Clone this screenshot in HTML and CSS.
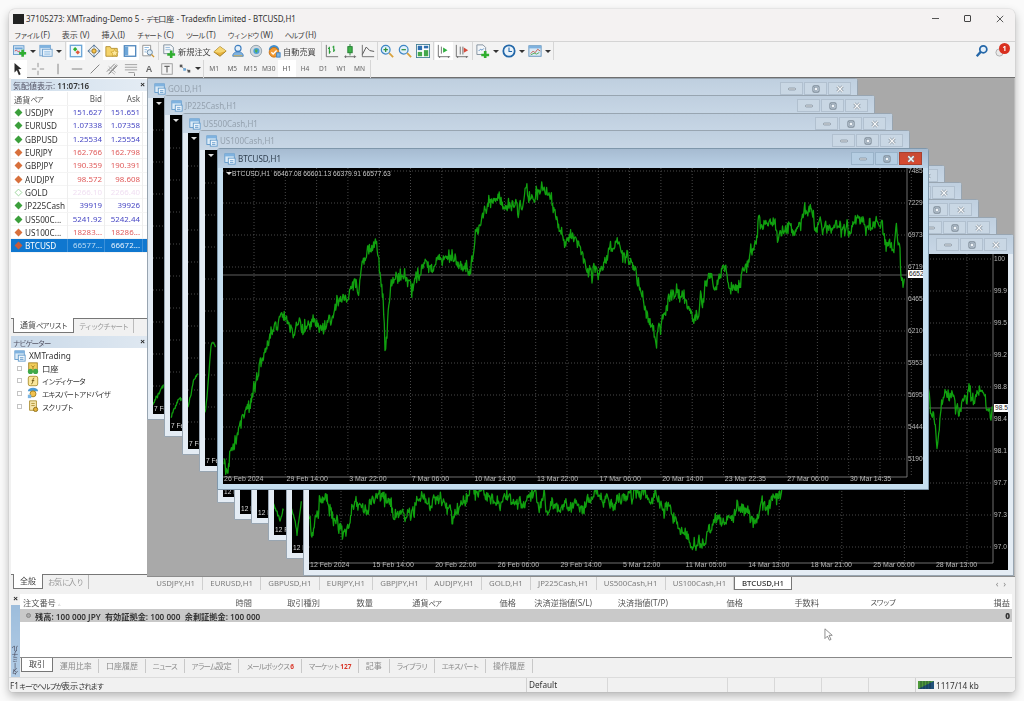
FILE: index.html
```html
<!DOCTYPE html>
<html lang="ja">
<head>
<meta charset="utf-8">
<title>XMTrading MT4</title>
<link rel="stylesheet" href="styles.css">
</head>
<body>
<svg class="defs" aria-hidden="true">
  <symbol id="i-new" viewBox="0 0 16 16"><rect x=".5" y="2" width="12" height="10" fill="#d4e6f6" stroke="#5f97c9"/><rect x="2" y="4" width="9" height="2" fill="#6ea6d8"/><path d="M2 8l2-1 2 2 2-1" stroke="#c44" fill="none"/><path d="M7 9h2.500V6.500h3V9H15v3h-2.500v2.500h-3V12H7z" fill="#2fae2f"/></symbol>
  <symbol id="i-prof" viewBox="0 0 16 16"><rect x="1" y="1.500" width="12" height="12" fill="#d4e6f6" stroke="#6f9fcb"/><rect x="1" y="1.500" width="12" height="3" fill="#7fb2df"/><rect x="4" y="6" width="11" height="8" fill="#e8f2fb" stroke="#6f9fcb"/><path d="M6 9h7M6 11.500h7" stroke="#7fb2df"/></symbol>
  <symbol id="i-mw" viewBox="0 0 16 16"><rect x="1.500" y="1.500" width="13" height="13" fill="#eef6fb" stroke="#6aa5d6" stroke-width="1.500"/><path d="M5 4l2.500 2.500L5 9 2.500 6.500z" fill="#2fae2f" transform="translate(2 -.5)"/><path d="M10 7l2.500 2.500L10 12 7.500 9.500z" fill="#e0583c"/></symbol>
  <symbol id="i-nav" viewBox="0 0 16 16"><path d="M8 1l7 7-7 7-7-7z" fill="#e9eef3" stroke="#5c6f80"/><circle cx="8" cy="8" r="2.500" fill="#f6c24a" stroke="#8a6a1a"/><path d="M8 1v3M8 12v3M1 8h3M12 8h3" stroke="#3b6fa5"/></symbol>
  <symbol id="i-fav" viewBox="0 0 16 16"><path d="M1 3h5l1 2h7v9H1z" fill="#f5d46b" stroke="#b08c2a"/><path d="M11 6l1.300 2.700 3 .4-2.200 2 .6 3-2.700-1.500-2.700 1.500.6-3-2.200-2 3-.4z" fill="#fde9a0" stroke="#c59a20" stroke-width=".7"/></symbol>
  <symbol id="i-panel" viewBox="0 0 16 16"><rect x="1.500" y="2" width="13" height="12" fill="#fff" stroke="#4f87bd" stroke-width="1.500"/><rect x="2" y="3" width="4" height="10" fill="#6ea6d8"/></symbol>
  <symbol id="i-tester" viewBox="0 0 16 16"><path d="M2 1.500h9v12H2z" fill="#fff" stroke="#8c8c8c"/><path d="M4 4h5M4 6.500h3M4 9h2" stroke="#7fb2df"/><circle cx="10" cy="9.500" r="3" fill="#dcecf8" stroke="#5f7f9d"/><path d="M12 12l3 3" stroke="#c9932d" stroke-width="1.500"/></symbol>
  <symbol id="i-order" viewBox="0 0 16 16"><path d="M2 1h8l3 3v7H2z" fill="#f3f6f9" stroke="#7c8a97"/><path d="M4 4h5M4 6.500h6" stroke="#8fb6d9"/><path d="M6 10.500h3v-3h3v3h3v3h-3v2.500H9v-2.500H6z" fill="#2fae2f"/></symbol>
  <symbol id="i-gold" viewBox="0 0 16 16"><path d="M1 9l7-6 7 5-7 6z" fill="#e6b23c" stroke="#9a7417"/><path d="M8 3l7 5-7 2-7-1z" fill="#f6d673"/></symbol>
  <symbol id="i-users" viewBox="0 0 16 16"><circle cx="8" cy="5" r="3.500" fill="#e4f0fa" stroke="#3f7fc0" stroke-width="1.300"/><path d="M2 14c0-4 3-5 6-5s6 1 6 5z" fill="#7fb2df" stroke="#3f7fc0"/><path d="M3 13.500h10" stroke="#e6b23c"/></symbol>
  <symbol id="i-globe" viewBox="0 0 16 16"><circle cx="8" cy="8" r="6.500" fill="#cfd8df" stroke="#8d9aa5"/><circle cx="8.500" cy="8" r="3.500" fill="#4a9fd8"/><path d="M7 6l3 .5L9 10 7 9z" fill="#4fae4f"/></symbol>
  <symbol id="i-auto" viewBox="0 0 16 16"><path d="M2 7a6 6 0 0 1 12 0z" fill="#3f8fd0"/><circle cx="8" cy="9.500" r="5.500" fill="#f29a33" stroke="#c46f14"/><path d="M5 9.500l2 2 4-4" stroke="#fff" stroke-width="1.500" fill="none"/><rect x="11" y="10" width="4" height="5" fill="#7cb5e2" stroke="#3f7fc0"/></symbol>
  <symbol id="i-bar" viewBox="0 0 16 16"><path d="M1.500 1v13.500H15" stroke="#666" fill="none"/><path d="M5 3v8M3.500 5H5M5 9h1.500M10 2v7M8.500 3.500H10M10 7h1.500" stroke="#1f9a2f" stroke-width="1.200"/></symbol>
  <symbol id="i-candle" viewBox="0 0 16 16"><path d="M1.500 14.500H15M3 16v-3M13 16v-3" stroke="#666"/><path d="M8 0v13" stroke="#1f7a2f"/><rect x="5.500" y="3" width="5" height="7" fill="#3fb34a" stroke="#1f7a2f"/></symbol>
  <symbol id="i-line" viewBox="0 0 16 16"><path d="M1.500 1v13.500H15" stroke="#666" fill="none"/><path d="M1.500 12L6 3.500l4 4 5 1" stroke="#555" stroke-width="1.100" fill="none"/></symbol>
  <symbol id="i-zin" viewBox="0 0 16 16"><circle cx="6.500" cy="6.500" r="5" fill="#dff0fb" stroke="#3f87c5" stroke-width="1.400"/><path d="M4 6.500h5M6.500 4v5" stroke="#2c8f3a" stroke-width="1.400"/><path d="M10.500 10.500l4.500 4.500" stroke="#d9a23b" stroke-width="2"/></symbol>
  <symbol id="i-zout" viewBox="0 0 16 16"><circle cx="6.500" cy="6.500" r="5" fill="#dff0fb" stroke="#3f87c5" stroke-width="1.400"/><path d="M4 6.500h5" stroke="#2c8f3a" stroke-width="1.400"/><path d="M10.500 10.500l4.500 4.500" stroke="#d9a23b" stroke-width="2"/></symbol>
  <symbol id="i-tile" viewBox="0 0 16 16"><rect x=".5" y=".5" width="15" height="15" fill="#fff" stroke="#3f7d92"/><rect x="2" y="2" width="5" height="5" fill="#2d6fb0"/><rect x="9" y="2" width="5" height="3" fill="#2d6fb0"/><rect x="2" y="9" width="5" height="5" fill="#43a84a"/><rect x="9" y="7" width="5" height="7" fill="#43a84a"/></symbol>
  <symbol id="i-scroll" viewBox="0 0 16 16"><path d="M1.500 1v13.500H15M3 16v-2M13 16v-2" stroke="#666" fill="none"/><path d="M5 3v8" stroke="#666"/><path d="M7 4l5 3-5 3z" fill="#2faf3f"/></symbol>
  <symbol id="i-shift" viewBox="0 0 16 16"><path d="M1.500 1v13.500H15M3 16v-2M13 16v-2" stroke="#666" fill="none"/><path d="M6 3v9M9 3v9" stroke="#666"/><path d="M10 4l5 3-5 3z" fill="#d64a3a"/></symbol>
  <symbol id="i-add" viewBox="0 0 16 16"><path d="M1 1h7l3 3v8H1z" fill="#f3f6f9" stroke="#7c8a97"/><path d="M3 8l2-2 2 1 2-2" stroke="#4f87bd" fill="none"/><path d="M6 11h3V8h3v3h3v3h-3v2H9v-2H6z" fill="#2fae2f"/></symbol>
  <symbol id="i-clock" viewBox="0 0 16 16"><circle cx="8" cy="8" r="6.500" fill="#e9f3fb" stroke="#2267a8" stroke-width="2"/><path d="M8 4v4.500h3.500" stroke="#2267a8" stroke-width="1.200" fill="none"/></symbol>
  <symbol id="i-tpl" viewBox="0 0 16 16"><rect x="1" y="2" width="14" height="12" fill="#d9e9f6" stroke="#5f8fb8"/><rect x="1" y="2" width="14" height="3" fill="#7fb2df"/><path d="M3 11l3-3 2 2 3-4 3 2" stroke="#c4553f" fill="none"/><path d="M3 12.500l4-2 3 1 3-2" stroke="#4fa84f" fill="none"/></symbol>
  <symbol id="i-search" viewBox="0 0 16 16"><circle cx="9.500" cy="6" r="4" fill="#e5f0fa" stroke="#2467a8" stroke-width="2"/><path d="M6.500 9L2 14" stroke="#2467a8" stroke-width="2.600"/></symbol>
  <symbol id="i-cursor" viewBox="0 0 16 16"><path d="M4 1l8 7-3.500.4L11 14l-2 1-2.300-5.500L4 12z" fill="#2b2b2b"/></symbol>
  <symbol id="i-cross" viewBox="0 0 16 16"><path d="M8 1v5M8 10v5M1 8h5M10 8h5" stroke="#8a8a8a"/></symbol>
  <symbol id="i-vl" viewBox="0 0 16 16"><path d="M8 2v12" stroke="#777"/></symbol>
  <symbol id="i-hl" viewBox="0 0 16 16"><path d="M2 8h12" stroke="#777"/></symbol>
  <symbol id="i-tl" viewBox="0 0 16 16"><path d="M3 13L13 3" stroke="#777"/></symbol>
  <symbol id="i-chan" viewBox="0 0 16 16"><path d="M1 11l9-9M4 13l9-9M3 14l9-11" stroke="#777"/><path d="M3 5l8 7M2 8l8 6" stroke="#aaa"/></symbol>
  <symbol id="i-fib" viewBox="0 0 16 16"><path d="M1 3h14M1 6h14M1 9h14M5 12h7" stroke="#999"/><path d="M12 13v3" stroke="#777"/></symbol>
  <symbol id="i-tbox" viewBox="0 0 16 16"><rect x="2" y="2" width="12" height="12" fill="#f4f4f4" stroke="#999"/><path d="M5 5h6M8 5v7" stroke="#666" stroke-width="1.300"/></symbol>
  <symbol id="i-shapes" viewBox="0 0 16 16"><path d="M3 4l4 4 6 2" stroke="#555" stroke-dasharray="2 1" fill="none"/><rect x="2" y="3" width="3" height="3" fill="#555"/><rect x="6" y="7" width="3" height="3" fill="#6aa5d6"/><rect x="11" y="9" width="3" height="3" fill="#555"/></symbol>
  <symbol id="i-win" viewBox="0 0 14 14"><rect x="1" y="1" width="11" height="10" fill="#dcebf7" stroke="#5d97c9"/><rect x="1" y="1" width="11" height="3" fill="#7fb2df"/><rect x="5" y="6" width="8" height="7" fill="#eef6fc" stroke="#5d97c9"/><path d="M7 9h4M7 11h4" stroke="#5d97c9"/></symbol>
  <symbol id="b-min" viewBox="0 0 9 9"><rect x=".5" y="3.500" width="8" height="2" rx="1" fill="#f1f5f8" stroke="#7f8c98"/></symbol>
  <symbol id="b-max" viewBox="0 0 9 9"><rect x="1" y="1" width="7" height="7" rx="1.500" fill="none" stroke="#7f8c98" stroke-width="1.200"/><rect x="3" y="3" width="3" height="3" fill="#f1f5f8" stroke="#7f8c98" stroke-width=".6"/></symbol>
  <symbol id="b-x" viewBox="0 0 9 9"><path d="M1.500 1.500l6 6M7.500 1.500l-6 6" stroke="#7f8c98" stroke-width="3"/><path d="M1.500 1.500l6 6M7.500 1.500l-6 6" stroke="#f4f6f8" stroke-width="1.500"/></symbol>
  <symbol id="i-acc" viewBox="0 0 14 14"><rect x="2" y="1" width="10" height="10" fill="#f3cd5a" stroke="#9d7c1c"/><path d="M5 4l2 2 2-2M7 6v3" stroke="#9d7c1c" fill="none"/><circle cx="4" cy="11" r="3" fill="#3fa94a"/><circle cx="10" cy="11" r="3" fill="#3fa94a"/></symbol>
  <symbol id="i-ind" viewBox="0 0 14 14"><rect x="1.500" y="1.500" width="11" height="11" rx="2" fill="#fbe79b" stroke="#a78a2a"/><path d="M8.500 3.500C7 3.500 7 5 6.800 7S6 10.500 5 10.500M5.500 6.500h3" stroke="#6b5412" fill="none"/></symbol>
  <symbol id="i-ea" viewBox="0 0 14 14"><path d="M1 5a6 4 0 0 1 12 0z" fill="#4c9bd6"/><circle cx="7" cy="8" r="3.500" fill="#f2c14e" stroke="#997816"/><rect x="1" y="9" width="4" height="4" fill="#7cb5e2"/></symbol>
  <symbol id="i-scr" viewBox="0 0 14 14"><path d="M3 1h8v11H3z" fill="#f7e7b0" stroke="#a78a2a"/><path d="M5 4h4M5 6.500h4" stroke="#a78a2a"/><circle cx="10" cy="11" r="2.500" fill="#e6b23c" stroke="#876a14"/></symbol>
</svg>

<div class="app">
  <header class="titlebar">
    <span class="applogo"></span>
    <span class="apptitle">37105273: XMTrading-Demo 5 - <span class="k">デモ</span>口座 - Tradexfin Limited - BTCUSD,H1</span>
    <span class="wincaps">
      <span class="wcap wcap-min"></span>
      <span class="wcap wcap-max"></span>
      <svg class="wcap-x" viewBox="0 0 10 10"><path d="M1 1l8 8M9 1l-8 8" stroke="#444" stroke-width="1.100"/></svg>
    </span>
  </header>
  <nav class="menubar">
    <span><span class="k">ファイル</span> (F)</span><span>表示 (V)</span><span>挿入(I)</span><span><span class="k">チャート</span> (C)</span><span><span class="k">ツール</span> (T)</span><span><span class="k">ウィンドウ</span> (W)</span><span><span class="k">ヘルプ</span> (H)</span>
  </nav>
  <div class="toolbar">
    <svg class="ib"><use href="#i-new"/></svg><i class="ar"></i>
    <svg class="ib"><use href="#i-prof"/></svg><i class="ar"></i><i class="sep s4"></i>
    <svg class="ib on"><use href="#i-mw"/></svg>
    <svg class="ib"><use href="#i-nav"/></svg>
    <svg class="ib on"><use href="#i-fav"/></svg>
    <svg class="ib on"><use href="#i-panel"/></svg>
    <svg class="ib"><use href="#i-tester"/></svg><i class="sep"></i>
    <svg class="ib"><use href="#i-order"/></svg><span class="tbtext tb-order">新規注文</span>
    <svg class="ib"><use href="#i-gold"/></svg>
    <svg class="ib"><use href="#i-users"/></svg>
    <svg class="ib"><use href="#i-globe"/></svg>
    <svg class="ib"><use href="#i-auto"/></svg><span class="tbtext tb-auto">自動売買</span><i class="sep"></i>
    <svg class="ib"><use href="#i-bar"/></svg>
    <svg class="ib"><use href="#i-candle"/></svg>
    <svg class="ib"><use href="#i-line"/></svg><i class="sep s1"></i>
    <svg class="ib"><use href="#i-zin"/></svg>
    <svg class="ib"><use href="#i-zout"/></svg>
    <svg class="ib"><use href="#i-tile"/></svg><i class="sep"></i>
    <svg class="ib on"><use href="#i-scroll"/></svg>
    <svg class="ib"><use href="#i-shift"/></svg><i class="sep"></i>
    <svg class="ib"><use href="#i-add"/></svg><i class="ar"></i>
    <svg class="ib"><use href="#i-clock"/></svg><i class="ar"></i>
    <svg class="ib"><use href="#i-tpl"/></svg><i class="ar"></i><i class="sep"></i>
    <span class="spring"></span>
    <svg class="ib"><use href="#i-search"/></svg>
    <span class="notify"><svg class="bubble" viewBox="0 0 10 10"><circle cx="5" cy="5" r="4" fill="#e8e8e8" stroke="#aaa"/></svg><b class="badge">1</b></span>
  </div>
  <div class="toolbar toolbar2">
    <svg class="ib on"><use href="#i-cursor"/></svg>
    <svg class="ib gap2"><use href="#i-cross"/></svg>
    <svg class="ib gap2"><use href="#i-vl"/></svg>
    <svg class="ib gap1"><use href="#i-hl"/></svg>
    <svg class="ib"><use href="#i-tl"/></svg>
    <svg class="ib"><use href="#i-chan"/></svg>
    <svg class="ib"><use href="#i-fib"/></svg>
    <span class="ib tx-a">A</span>
    <svg class="ib"><use href="#i-tbox"/></svg>
    <svg class="ib"><use href="#i-shapes"/></svg><i class="ar"></i><i class="sep"></i>
    <span class="tf">M1</span><span class="tf">M5</span><span class="tf">M15</span><span class="tf">M30</span><span class="tf on">H1</span><span class="tf">H4</span><span class="tf">D1</span><span class="tf">W1</span><span class="tf">MN</span><i class="sep"></i>
  </div>

  <div class="main">
    <aside class="side">
      <section class="panel mw">
        <div class="phead"><span>気配値表示: <b>11:07:16</b></span><i class="pclose">×</i></div>
        <div class="mrow mhead"><span class="c-sym">通貨<span class="k">ペア</span></span><span class="c-num">Bid</span><span class="c-num">Ask</span></div>
        <div class="mrow up"><span class="c-sym"><i class="dia"></i>USDJPY</span><span class="c-num">151.627</span><span class="c-num">151.651</span></div>
        <div class="mrow up"><span class="c-sym"><i class="dia"></i>EURUSD</span><span class="c-num">1.07338</span><span class="c-num">1.07358</span></div>
        <div class="mrow up"><span class="c-sym"><i class="dia"></i>GBPUSD</span><span class="c-num">1.25534</span><span class="c-num">1.25554</span></div>
        <div class="mrow dn"><span class="c-sym"><i class="dia"></i>EURJPY</span><span class="c-num">162.766</span><span class="c-num">162.798</span></div>
        <div class="mrow dn"><span class="c-sym"><i class="dia"></i>GBPJPY</span><span class="c-num">190.359</span><span class="c-num">190.391</span></div>
        <div class="mrow dn"><span class="c-sym"><i class="dia"></i>AUDJPY</span><span class="c-num">98.572</span><span class="c-num">98.608</span></div>
        <div class="mrow off"><span class="c-sym"><i class="dia"></i>GOLD</span><span class="c-num">2266.10</span><span class="c-num">2266.40</span></div>
        <div class="mrow up"><span class="c-sym"><i class="dia"></i>JP225Cash</span><span class="c-num">39919</span><span class="c-num">39926</span></div>
        <div class="mrow up"><span class="c-sym"><i class="dia"></i>US500C...</span><span class="c-num">5241.92</span><span class="c-num">5242.44</span></div>
        <div class="mrow dn"><span class="c-sym"><i class="dia"></i>US100C...</span><span class="c-num">18283...</span><span class="c-num">18286...</span></div>
        <div class="mrow sel"><span class="c-sym"><i class="dia"></i>BTCUSD</span><span class="c-num">66577...</span><span class="c-num c-hi">66672...</span></div>
        <div class="pfill"></div>
        <div class="ptabs"><span class="ptab on">通貨<span class="k">ペアリスト</span></span><span class="ptab"><span class="k">ティックチャート</span></span></div>
      </section>
      <section class="panel nav">
        <div class="phead navhead"><span class="k">ナビゲーター</span><i class="pclose">×</i></div>
        <ul class="tree">
          <li class="root"><svg class="ti"><use href="#i-win"/></svg>XMTrading</li>
          <li><i class="exp"></i><svg class="ti"><use href="#i-acc"/></svg>口座</li>
          <li><i class="exp"></i><svg class="ti"><use href="#i-ind"/></svg><span class="k">インディケータ</span></li>
          <li><i class="exp"></i><svg class="ti"><use href="#i-ea"/></svg><span class="k">エキスパートアドバイザ</span></li>
          <li><i class="exp"></i><svg class="ti"><use href="#i-scr"/></svg><span class="k">スクリプト</span></li>
        </ul>
        <div class="ptabs navtabs"><span class="ptab on">全般</span><span class="ptab"><span class="k">お</span>気<span class="k">に</span>入<span class="k">り</span></span></div>
      </section>
    </aside>

    <div class="workspace">
      <div class="mdi">
        <!-- second cascade: the title bars of the first two lie fully behind the active window -->
        <article class="win w-usdjpy0" aria-label="USDJPY,H1"><div class="wt"></div>
          <div class="chart"><span class="sliver-date">12 Feb</span></div></article>
        <article class="win w-eurusd" aria-label="EURUSD,H1"><div class="wt"><span class="btns"><span class="wb"><svg><use href="#b-min"/></svg></span><span class="wb"><svg><use href="#b-max"/></svg></span><span class="wb"><svg><use href="#b-x"/></svg></span></span></div>
          <div class="chart"><span class="sliver-date">12 Feb</span></div></article>
        <article class="win w-gbpusd"><div class="wt"><svg class="wi"><use href="#i-win"/></svg><span>GBPUSD,H1</span><span class="btns"><span class="wb"><svg><use href="#b-min"/></svg></span><span class="wb"><svg><use href="#b-max"/></svg></span><span class="wb"><svg><use href="#b-x"/></svg></span></span></div>
          <div class="chart"><span class="sliver-date">12 Feb</span></div></article>
        <article class="win w-eurjpy"><div class="wt"><svg class="wi"><use href="#i-win"/></svg><span>EURJPY,H1</span><span class="btns"><span class="wb"><svg><use href="#b-min"/></svg></span><span class="wb"><svg><use href="#b-max"/></svg></span><span class="wb"><svg><use href="#b-x"/></svg></span></span></div>
          <div class="chart"><svg class="plot" data-pts="272,497 276,510 280,522 284,510" data-jit="3"></svg><span class="sliver-date">12 Feb</span></div></article>
        <article class="win w-gbpjpy"><div class="wt"><svg class="wi"><use href="#i-win"/></svg><span>GBPJPY,H1</span><span class="btns"><span class="wb"><svg><use href="#b-min"/></svg></span><span class="wb"><svg><use href="#b-max"/></svg></span><span class="wb"><svg><use href="#b-x"/></svg></span></span></div>
          <div class="chart"><svg class="plot" data-pts="290,505 294,515 297,535 300,512 302,497" data-jit="3"></svg><span class="sliver-date">12 Feb</span></div></article>
        <article class="win w-audjpy"><div class="wt"><svg class="wi"><use href="#i-win"/></svg><span>AUDJPY,H1</span><span class="btns"><span class="wb"><svg><use href="#b-min"/></svg></span><span class="wb"><svg><use href="#b-max"/></svg></span><span class="wb"><svg><use href="#b-x"/></svg></span></span></div>
          <div class="chart">
            <svg class="plot" data-gx="341,62.600,11" data-gy="259,32,10" data-ax="993,563" data-price="408"
              data-pts="309,515 313,535 320,500 330,507 343,533 353,503 367,517 373,497 384,500 396,512 410,515 424,500 438,497 452,508 470,495 486,492 502,498 520,505 538,497 558,512 578,503 598,497 618,503 638,495 658,503 672,518 684,535 693,553 702,540 716,522 734,512 752,518 770,505 782,490 790,480 860,430 928,390 933,420 937,443 941,410 945,398 950,402 958,412 964,400 969,392 974,410 980,388 984,395 989,415 991,425 993,410"></svg>
            <div class="ylabels ylabels-fx"><span>100</span><span>99.9</span><span>99.5</span><span>99.2</span><span>98.8</span><span>98.4</span><span>98.1</span><span>97.7</span><span>97.3</span><span>97.0</span></div>
            <span class="pbox pbox-fx">98.5</span>
            <div class="xlabels"><span>12 Feb 2024</span><span>15 Feb 14:00</span><span>20 Feb 22:00</span><span>26 Feb 06:00</span><span>29 Feb 14:00</span><span>5 Mar 12:00</span><span>11 Mar 05:00</span><span>14 Mar 13:00</span><span>18 Mar 21:00</span><span>25 Mar 05:00</span><span>28 Mar 13:00</span></div>
          </div></article>

        <!-- first cascade -->
        <article class="win w-gold"><div class="wt"><svg class="wi"><use href="#i-win"/></svg><span>GOLD,H1</span><span class="btns"><span class="wb"><svg><use href="#b-min"/></svg></span><span class="wb"><svg><use href="#b-max"/></svg></span><span class="wb"><svg><use href="#b-x"/></svg></span></span></div>
          <div class="chart"><i class="tri"></i><svg class="plot" data-gy="130,32,9" data-pts="153,405 158,395 164,385" data-jit="3"></svg><span class="sliver-date">7 Feb</span></div></article>
        <article class="win w-jp225"><div class="wt"><svg class="wi"><use href="#i-win"/></svg><span>JP225Cash,H1</span><span class="btns"><span class="wb"><svg><use href="#b-min"/></svg></span><span class="wb"><svg><use href="#b-max"/></svg></span><span class="wb"><svg><use href="#b-x"/></svg></span></span></div>
          <div class="chart"><i class="tri"></i><svg class="plot" data-gy="148,32,9" data-pts="171,417 174,410 178,403 182,398" data-jit="3"></svg><span class="sliver-date">7 Feb</span></div></article>
        <article class="win w-us500"><div class="wt"><svg class="wi"><use href="#i-win"/></svg><span>US500Cash,H1</span><span class="btns"><span class="wb"><svg><use href="#b-min"/></svg></span><span class="wb"><svg><use href="#b-max"/></svg></span><span class="wb"><svg><use href="#b-x"/></svg></span></span></div>
          <div class="chart"><i class="tri"></i><svg class="plot" data-gy="166,32,9" data-pts="188,408 191,395 194,380 197,375 199,372" data-jit="3"></svg><span class="sliver-date">7 Feb</span></div></article>
        <article class="win w-us100"><div class="wt"><svg class="wi"><use href="#i-win"/></svg><span>US100Cash,H1</span><span class="btns"><span class="wb"><svg><use href="#b-min"/></svg></span><span class="wb"><svg><use href="#b-max"/></svg></span><span class="wb"><svg><use href="#b-x"/></svg></span></span></div>
          <div class="chart"><i class="tri"></i><svg class="plot" data-gy="183,32,9" data-pts="205,412 207,395 209,370 211,345 213,340 216,345" data-jit="3"></svg><span class="sliver-date">7 Feb</span></div></article>

        <article class="win active w-btc"><div class="wt"><svg class="wi"><use href="#i-win"/></svg><span>BTCUSD,H1</span><span class="btns"><span class="wb"><svg><use href="#b-min"/></svg></span><span class="wb"><svg><use href="#b-max"/></svg></span><span class="wb wb-close"><svg><use href="#b-x"/></svg></span></span></div>
          <div class="chart">
            <svg class="plot" data-gx="254,31.300,22" data-gy="171,32,10" data-ax="907,477" data-price="275"
              data-pts="224,458 228,468 232,450 238,432 244,415 248,405 252,395 258,375 264,355 268,345 274,325 280,320 286,325 292,328 300,325 310,325 318,328 326,330 332,322 340,300 346,295 352,285 358,290 364,262 370,250 376,245 380,270 383,300 385,350 387,330 390,285 396,270 404,272 410,288 416,280 424,262 434,265 444,262 452,255 460,262 470,262 476,235 482,218 490,198 498,196 506,205 514,210 522,203 530,190 538,192 546,185 552,200 558,230 564,245 570,242 578,252 586,258 592,275 600,270 608,250 616,248 624,252 630,270 636,280 642,290 650,320 656,345 660,325 664,310 668,295 676,290 684,300 692,320 700,305 708,285 716,280 724,270 732,282 740,288 746,270 752,255 758,225 764,220 772,225 780,235 788,232 796,228 806,218 814,222 822,235 830,228 840,232 850,235 860,228 870,222 878,218 883,227 885,243 889,245 892,253 897,233 900,243 901,273 903,278 905,273"></svg>
            <i class="tri"></i>
            <span class="ohlc">BTCUSD,H1&nbsp; 66467.08 66601.13 66379.91 66577.63</span>
            <div class="ylabels"><span>7485</span><span>7229</span><span>6973</span><span>6719</span><span>6465</span><span>6210</span><span>5953</span><span>5695</span><span>5444</span><span>5190</span></div>
            <span class="pbox pbox-btc">6652</span>
            <div class="xlabels"><span>26 Feb 2024</span><span>29 Feb 14:00</span><span>3 Mar 22:00</span><span>7 Mar 06:00</span><span>10 Mar 14:00</span><span>13 Mar 22:00</span><span>17 Mar 06:00</span><span>20 Mar 14:00</span><span>23 Mar 22:35</span><span>27 Mar 06:00</span><span>30 Mar 14:35</span></div>
          </div></article>
      </div>
      <div class="charttabs">
        <span>USDJPY,H1</span><span>EURUSD,H1</span><span>GBPUSD,H1</span><span>EURJPY,H1</span><span>GBPJPY,H1</span><span>AUDJPY,H1</span><span>GOLD,H1</span><span>JP225Cash,H1</span><span>US500Cash,H1</span><span>US100Cash,H1</span><span class="on">BTCUSD,H1</span>
        <em class="tabnav">‹&nbsp;&nbsp;›</em>
      </div>
    </div>
  </div>

  <section class="terminal">
    <div class="tstrip"><i class="pclose">×</i><span class="tvert k">ターミナル</span></div>
    <div class="tbody">
      <div class="ghead"><span class="first">注文番号 <small>▵</small></span><span>時間</span><span>取引種別</span><span>数量</span><span>通貨<span class="k">ペア</span></span><span>価格</span><span>決済逆指値(S/L)</span><span>決済指値(T/P)</span><span>価格</span><span>手数料</span><span class="k">スワップ</span><span>損益</span></div>
      <div class="grow"><span class="bal"><i class="dot"></i>残高: 100 000 JPY&nbsp; 有効証拠金: 100 000&nbsp; 余剰証拠金: 100 000</span><b>0</b></div>
      <div class="gfill"><svg class="ptr" viewBox="0 0 12 16"><path d="M1 1v12l3-3 2.500 5 2-1-2.500-5h4z" fill="#fff" stroke="#777"/></svg></div>
      <div class="ttabs">
        <span class="on">取引</span><span>運用比率</span><span>口座履歴</span><span><em class="k">ニュース</em></span><span><em class="k">アラーム</em>設定</span><span><em class="k">メールボックス</em><b>6</b></span><span><em class="k">マーケット</em><b>127</b></span><span>記事</span><span><em class="k">ライブラリ</em></span><span><em class="k">エキスパート</em></span><span>操作履歴</span>
      </div>
    </div>
  </section>

  <footer class="status">
    <span class="s-help">F1<span class="k">キーでヘルプが</span>表示<span class="k">されます</span></span>
    <span class="s-def">Default</span>
    <span class="s-cell s-wide"></span><span class="s-cell"></span><span class="s-cell"></span><span class="s-cell"></span><span class="s-cell"></span>
    <span class="s-net"><svg class="net" viewBox="0 0 16 8"><rect width="16" height="8" fill="#4e9a3a"/><path d="M0 8L16 0V8z" fill="#1f4f78"/><path d="M3 0v8M6 0v8M9 0v8M12 0v8" stroke="#123" stroke-width=".6"/></svg>1117/14 kb</span>
  </footer>
</div>
<script src="chart.js"></script>
</body>
</html>
```

FILE: styles.css
```css
* { box-sizing: border-box; }
html, body { margin: 0; height: 100%; }
body {
  width: 1024px; height: 701px; overflow: hidden; background: #fafafa;
  padding: 9px 9px 0;
  font-family: "Noto Sans", "Noto Sans CJK JP", sans-serif;
  font-size: 8px; color: #444;
}
i, em { font-style: normal; }
.defs { position: absolute; width: 0; height: 0; }
/* kana run narrow in the original UI font */
.k { font-size: 7.400px; letter-spacing: -1.200px; }

.app {
  width: 1006px; height: 683px; display: flex; flex-direction: column;
  background: #f1f1f1; border-radius: 6px 6px 4px 4px; overflow: hidden;
  box-shadow: 0 0 1px #888, 0 4px 10px rgba(0,0,0,.28);
  filter: blur(.35px);
}
.titlebar { height: 19px; display: flex; align-items: center; padding: 0 0 0 4px; background: #f4f2f2; flex: none; }
.applogo { width: 11px; height: 10px; background: #222; margin-right: 2px; flex: none; }
.apptitle { font-size: 8px; color: #333; white-space: nowrap; }
.wincaps { margin-left: auto; display: flex; align-items: center; gap: 25px; padding-right: 11px; }
.wcap-min { width: 7px; height: 1px; background: #555; }
.wcap-max { width: 7px; height: 7px; border: 1px solid #444; border-radius: 1px; }
.wcap-x { width: 8px; height: 8px; }
.menubar { height: 14px; flex: none; display: flex; align-items: center; padding-left: 5px; gap: 12px; font-size: 8px; color: #444; background: #f4f2f2; border-bottom: 1px solid #d4d4d4; }

.toolbar { height: 18px; flex: none; display: flex; align-items: center; padding-left: 2px; background: #f3f3f3; }
.toolbar2 { padding-left: 0; border-bottom: 1px solid #6f6f6f; }
.ib { width: 18px; height: 18px; padding: 2px; flex: none; }
.ib.on { background: #fff; }
.gap2 { margin-left: 2px; }
.gap1 { margin-left: 1px; }
.ar { width: 0; height: 0; border: 3px solid transparent; border-top: 3px solid #333; border-bottom: 0; margin: 0 1px; flex: none; }
.sep { width: 1px; height: 18px; background: #d6d6d6; margin: 0 1px; flex: none; }
.sep.s4 { margin: 0 1.500px; }
.sep.s1 { margin: 0; }
.tbtext { font-size: 8.200px; color: #444; white-space: nowrap; flex: none; }
.tb-order { width: 33px; }
.tb-auto { width: 37px; }
.spring { flex: 1; }
.notify { position: relative; width: 22px; height: 18px; margin-right: 2px; }
.bubble { position: absolute; left: 4px; top: 6px; width: 9px; height: 9px; }
.badge { position: absolute; left: 8px; top: 1px; width: 11px; height: 11px; border-radius: 50%; background: #d9301f; color: #fff; font-size: 7px; line-height: 11px; text-align: center; }
.tx-a { font: 700 9px/18px "Liberation Sans", sans-serif; text-align: center; color: #666; padding: 0; }
.tf { width: 18.200px; text-align: center; font-size: 6.600px; color: #666; line-height: 17px; flex: none; }
.tf.on { background: #fff; color: #555; }

.main { flex: none; height: 514px; display: flex; }
.side { width: 138px; flex: none; padding-left: 2px; display: flex; flex-direction: column; }
.panel { display: flex; flex-direction: column; background: #fff; }
.mw { height: 256px; flex: none; }
.nav { flex: 1; margin-top: 2px; background: #fff; }
.phead { height: 12px; flex: none; margin-top: 1px; display: flex; align-items: center; justify-content: space-between; padding: 0 2px; background: linear-gradient(90deg,#cfdeec,#e4ecf4); font-size: 8px; color: #556; }
.phead b { font-weight: 600; color: #333; }
.navhead { background: linear-gradient(90deg,#c9d9e9,#dfe8f1); margin-top: 0; }
.pclose { font: 700 8px/8px "Liberation Sans", sans-serif; color: #222; }
.mrow { height: 13.340px; display: grid; grid-template-columns: 57px 37px 38px; align-items: center; flex: none; border-bottom: 1px solid #f4f4f4; }
.mhead { height: 14px; margin-top: 1px; color: #555; }
.c-sym { display: flex; align-items: center; padding-left: 1px; white-space: nowrap; font-size: 8.200px; color: #333; border-right: 1px solid #eee; height: 100%; }
.c-num { text-align: right; padding-right: 2px; font-size: 7.900px; white-space: nowrap; border-right: 1px solid #eee; height: 100%; line-height: 13px; }
.mhead .c-sym { padding-left: 3px; color: #555; }
.mhead .c-num { color: #555; font-size: 8px; }
.dia { width: 7px; height: 7px; background: #3b9f3b; transform: rotate(45deg) scale(.8); margin: 0 3px; flex: none; }
.up .c-num { color: #4848c4; }
.dn .c-num { color: #e05b5b; }
.dn .dia { background: #d8703c; }
.off .c-num { color: #f0dff2; }
.off .dia { background: #fff; border: 1px solid #8fd08f; }
.sel { background: #0f77cf; }
.sel .c-sym { color: #fff; border-color: #3c90d8; }
.sel .c-num { color: #bcdcf5; border-color: #3c90d8; }
.sel .c-hi { color: #e8f4ff; }
.sel .dia { background: #c85a3a; }
.pfill { flex: 1; }
.ptabs { height: 16px; flex: none; display: flex; align-items: flex-start; background: #f1f1f1; padding-left: 2px; border-top: 1px solid #777; }
.ptab { height: 14px; padding: 0 5px; line-height: 13px; color: #999; white-space: nowrap; border-right: 1px solid #bbb; font-size: 8px; }
.ptab.on { background: #fff; color: #444; border: 1px solid #777; border-top: 0; margin-top: -1px; height: 15px; padding: 0 6px; }
.tree { list-style: none; margin: 0; padding: 0; flex: 1; }
.tree li { height: 12.600px; display: flex; align-items: center; font-size: 8.300px; color: #333; padding-left: 6px; white-space: nowrap; }
.tree .root { margin-top: 1px; padding-left: 3px; height: 13px; }
.exp { width: 5px; height: 5px; border: 1px solid #c4c4c4; margin-right: 5px; flex: none; }
.ti { width: 12px; height: 12px; margin-right: 3px; flex: none; }
.navtabs { height: 18px; }

.workspace { flex: 1; display: flex; flex-direction: column; min-width: 0; }
.mdi { position: relative; height: 498px; flex: none; background: #a9a9a9; overflow: hidden; border-right: 1px solid #bbb; }

.win {
  position: absolute; width: 711px; height: 342px; display: flex; flex-direction: column;
  padding: 0 5px 5px; background: #e4ecf4; border: 1px solid #98a5b1; border-radius: 3px 3px 0 0;
}
.wt { height: 19px; flex: none; margin: 0 -5px; padding: 0 6px; display: flex; align-items: center; background: linear-gradient(#bfcfdf,#c8d7e6); color: #94a1ae; font-size: 8px; }
.wi { width: 12px; height: 12px; margin-right: 2px; flex: none; }
.btns { margin-left: auto; display: flex; gap: 1px; }
.wb { width: 23px; height: 13px; display: flex; align-items: center; justify-content: center; border: 1px solid #b1c0cf; background: #c9d7e4; }
.wb svg { width: 8px; height: 8px; }
.chart { position: relative; flex: 1; background: #000; overflow: hidden; color: #b9b9b9; font: 6.600px/8px "Liberation Sans", sans-serif; }
.plot { position: absolute; inset: 0; width: 100%; height: 100%; }
.active { background: #c5deef; border-color: #7f97ab; }
.active .wt { background: linear-gradient(#a6bbd1,#bad1e6); color: #2f3e4e; }
.active .wb { background: #b5cde2; border-color: #9ab3c9; }
.active .wb-close { background: linear-gradient(#c84a34,#d8492f); border-color: #a8402e; }

.w-usdjpy0 { left: 70px; top: 83px; }
.w-eurusd  { left: 87px; top: 87px; height: 355px; }
.w-gbpusd  { left: 104px; top: 104px; }
.w-eurjpy  { left: 121px; top: 121px; }
.w-gbpjpy  { left: 139px; top: 139px; }
.w-audjpy  { left: 156px; top: 156px; }
.w-gold    { left: 0;    top: 0; }
.w-jp225   { left: 17px; top: 17px; }
.w-us500   { left: 35px; top: 35px; }
.w-us100   { left: 52px; top: 52px; }
.w-btc     { left: 70px; top: 70px; width: 712px; }

.tri { position: absolute; left: 3px; top: 4px; width: 0; height: 0; border: 3px solid transparent; border-top: 3px solid #ddd; border-bottom: 0; }
.ohlc { position: absolute; left: 9px; top: 2px; white-space: nowrap; color: #c8c8c8; font-size: 6.700px; }
.xlabels { position: absolute; left: 1px; bottom: 1px; display: flex; font-size: 7px; }
.xlabels span { width: 62.600px; white-space: nowrap; flex: none; }
.ylabels { position: absolute; left: 685px; top: -1px; display: flex; flex-direction: column; }
.ylabels span { height: 32px; }
.ylabels-fx { top: 1px; left: 685px; }
.pbox { position: absolute; background: #fff; color: #222; width: 20px; height: 8px; padding-left: 1px; }
.pbox-btc { left: 685px; top: 102px; }
.pbox-fx { left: 685px; top: 150px; }
.sliver-date { position: absolute; left: 1px; bottom: 1px; white-space: nowrap; color: #ddd; }

.charttabs { height: 16px; flex: none; display: flex; align-items: flex-start; background: #f1f1f1; padding-left: 2px; border-top: 1px solid #8c8c8c; }
.charttabs span { height: 13px; line-height: 13px; padding: 0 7.200px; font-size: 7.800px; color: #7d7d7d; border-right: 1px solid #cfcfcf; white-space: nowrap; }
.charttabs .on { background: #fff; color: #333; border: 1px solid #777; border-top: 0; padding: 0 6.500px; font-weight: 500; }
.tabnav { margin-left: auto; padding-right: 9px; color: #888; font-size: 9px; line-height: 13px; }

.terminal { height: 85px; flex: none; display: flex; padding-left: 2px; }
.tstrip { width: 9px; flex: none; display: flex; flex-direction: column; align-items: center; padding-top: 3px; }
.tstrip .pclose { height: 9px; }
.tvert { flex: 1; width: 9px; margin-top: 1px; background: linear-gradient(#b3cde6,#9dbddc); writing-mode: vertical-rl; transform: rotate(180deg); font-size: 7px; line-height: 9px; color: #445; padding-top: 2px; }
.tbody { flex: 1; min-width: 0; display: flex; flex-direction: column; background: #fff; margin-top: 2px; margin-right: 3px; }
.ghead { height: 15px; flex: none; display: grid; grid-template-columns: 150px 82px 68px 53px 68px 75px 76px 76px 75px 76px 76px 115px; align-items: center; font-size: 8.200px; color: #555; }
.ghead span { text-align: right; white-space: nowrap; }
.ghead .first { text-align: left; padding-left: 3px; }
.ghead small { color: #bbb; font-size: 5px; }
.grow { height: 13px; flex: none; background: #c9c9c9; display: flex; align-items: center; justify-content: space-between; padding: 0 2px 0 6px; font-size: 8.200px; font-weight: 600; color: #333; }
.bal { display: flex; align-items: center; white-space: nowrap; }
.dot { width: 5px; height: 5px; border-radius: 50%; background: #aaa; border: 1px solid #888; margin-right: 4px; }
.gfill { height: 36px; flex: none; position: relative; border-bottom: 1px solid #888; }
.ptr { position: absolute; left: 804px; top: 6px; width: 10px; height: 13px; }
.ttabs { flex: 1; display: flex; align-items: flex-start; background: #f1f1f1; padding-left: 1px; }
.ttabs span { height: 14px; line-height: 13px; padding: 0 6.700px; font-size: 8px; color: #8c8c8c; border-right: 1px solid #c8c8c8; white-space: nowrap; margin-top: 1px; }
.ttabs .on { background: #fff; color: #444; border: 1px solid #777; border-top: 0; margin-top: -1px; height: 15px; padding: 0 7px; }
.ttabs b { color: #d9382a; font-size: 6.500px; font-weight: 700; margin-left: 1px; }

.status { flex: 1; display: flex; align-items: center; background: #f1f1f1; border-top: 1px solid #dcdcdc; font-size: 8.200px; color: #333; }
.s-help { width: 517px; padding-left: 1px; white-space: nowrap; }
.s-def { width: 81px; height: 100%; padding-left: 2px; border-left: 1px solid #d0d0d0; line-height: 14px; }
.s-cell { width: 47px; height: 100%; border-left: 1px solid #d8d8d8; }
.s-wide { width: 120px; }
.s-net { display: flex; align-items: center; gap: 2px; height: 100%; padding-left: 2px; border-left: 1px solid #d0d0d0; white-space: nowrap; }
.net { width: 16px; height: 8px; }
```

FILE: chart.js
```javascript
// Draws the price lines and grids of the chart windows from their data attributes.
(function () {
  var NS = 'http://www.w3.org/2000/svg';
  var seed = 987654;
  function rnd() { seed = (seed * 16807) % 2147483647; return seed / 2147483647 - 0.5; }
  function line(svg, x1, y1, x2, y2, color, dash) {
    var l = document.createElementNS(NS, 'line');
    l.setAttribute('x1', x1); l.setAttribute('y1', y1);
    l.setAttribute('x2', x2); l.setAttribute('y2', y2);
    l.setAttribute('stroke', color); l.setAttribute('stroke-width', '0.8');
    if (dash) l.setAttribute('stroke-dasharray', dash);
    svg.appendChild(l);
  }
  document.querySelectorAll('svg.plot').forEach(function (svg) {
    var r = svg.parentNode.getBoundingClientRect();
    svg.setAttribute('viewBox', r.left + ' ' + r.top + ' ' + r.width + ' ' + r.height);
    var ax = (svg.dataset.ax || (r.right - 16) + ',' + (r.bottom - 8)).split(',').map(Number);
    if (svg.dataset.gy) {
      var gy = svg.dataset.gy.split(',').map(Number);
      for (var i = 0; i < gy[2]; i++) line(svg, r.left, gy[0] + i * gy[1], ax[0], gy[0] + i * gy[1], '#5a5a5a', '1 2');
    }
    if (svg.dataset.gx) {
      var gx = svg.dataset.gx.split(',').map(Number);
      for (var j = 0; j < gx[2]; j++) line(svg, gx[0] + j * gx[1], r.top, gx[0] + j * gx[1], ax[1], '#5a5a5a', '1 2');
    }
    if (svg.dataset.ax) {
      line(svg, ax[0], r.top, ax[0], ax[1], '#8a8a8a');
      line(svg, r.left, ax[1], ax[0], ax[1], '#8a8a8a');
    }
    if (svg.dataset.price) line(svg, r.left, +svg.dataset.price, ax[0], +svg.dataset.price, '#777');
    if (svg.dataset.pts) {
      var pts = svg.dataset.pts.split(' ').map(function (p) { return p.split(',').map(Number); });
      var jit = +(svg.dataset.jit || 11), out = [], drift = 0;
      for (var k = 0; k < pts.length - 1; k++) {
        var a = pts[k], b = pts[k + 1], n = Math.max(1, Math.round((b[0] - a[0]) / 0.6));
        for (var m = 0; m < n; m++) {
          var t = m / n;
          drift = drift * 0.85 + rnd() * jit * 0.8;
          out.push((a[0] + (b[0] - a[0]) * t).toFixed(1) + ',' + (a[1] + (b[1] - a[1]) * t + drift + rnd() * jit).toFixed(1));
        }
      }
      var pl = document.createElementNS(NS, 'polyline');
      pl.setAttribute('points', out.join(' '));
      pl.setAttribute('fill', 'none');
      pl.setAttribute('stroke', '#10a00f');
      pl.setAttribute('stroke-width', '1.3');
      pl.setAttribute('stroke-linejoin', 'round');
      svg.appendChild(pl);
    }
  });
})();
```
